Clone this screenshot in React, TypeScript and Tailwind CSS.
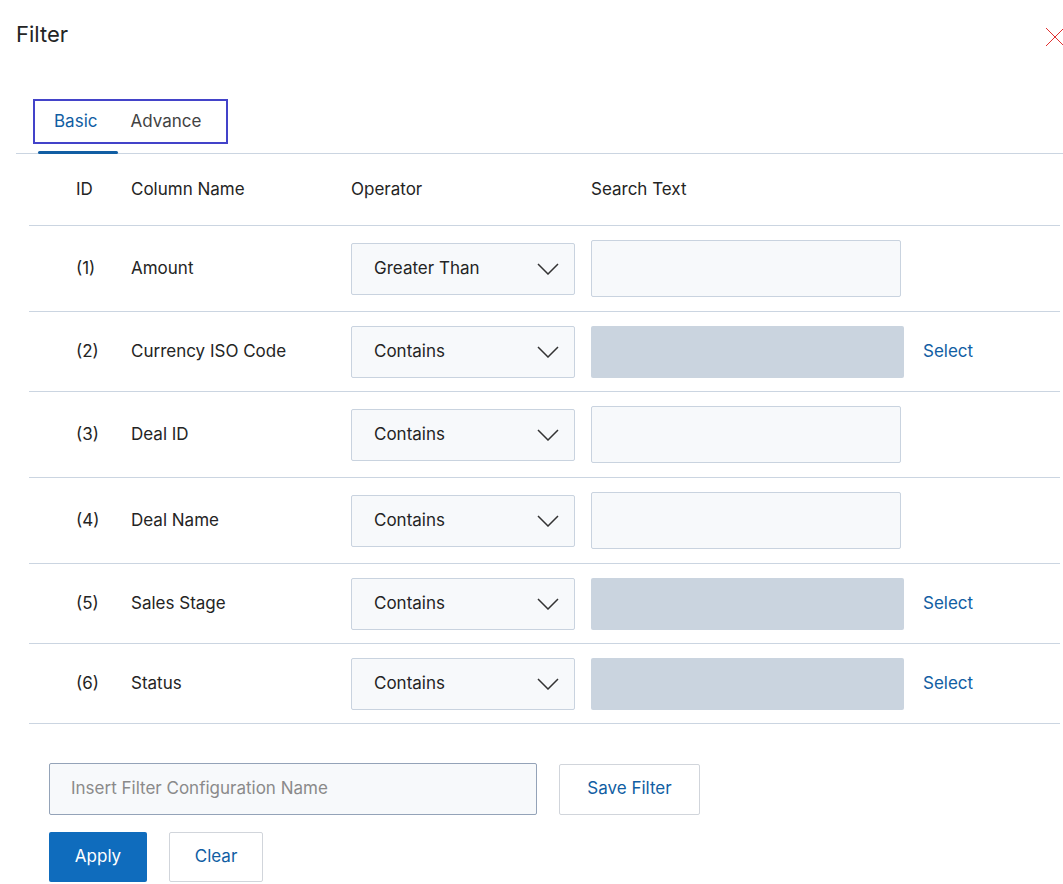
import React from "react";

const rows = [
  { id: "(1)", name: "Amount", op: "Greater Than", sel: false },
  { id: "(2)", name: "Currency ISO Code", op: "Contains", sel: true },
  { id: "(3)", name: "Deal ID", op: "Contains", sel: false },
  { id: "(4)", name: "Deal Name", op: "Contains", sel: false },
  { id: "(5)", name: "Sales Stage", op: "Contains", sel: true },
  { id: "(6)", name: "Status", op: "Contains", sel: true },
];

function Chevron() {
  return (
    <svg width="22" height="12" viewBox="0 0 22 12" fill="none" stroke="#333" strokeWidth="1.5">
      <path d="M1 1l10 10L21 1" />
    </svg>
  );
}

export default function App() {
  return (
    <div className="w-[1063px] h-[884px] bg-white overflow-hidden relative text-[#242424]" style={{ fontFamily: "Inter, 'Noto Sans', sans-serif" }}>
      <div className="pl-4 pt-[20px] text-[22px] leading-[28px]">Filter</div>
      <svg className="absolute left-[1045px] top-[27px]" width="20" height="20" viewBox="0 0 20 20" stroke="#e03030" strokeWidth="1">
        <path d="M1 1l18 18M19 1L1 19" />
      </svg>
      <div className="ml-4 mt-[51px] border-b border-[#cbd5e1] h-[55px] relative">
        <div className="absolute left-[17px] top-0 w-[195px] h-[45px] border-2 border-[#4343c9] flex items-center text-[17px]">
          <span className="ml-[19px] text-[#115ea3]">Basic</span>
          <span className="ml-[33px] text-[#424242]">Advance</span>
        </div>
        <div className="absolute left-[22px] bottom-[-1px] w-[80px] h-[3px] bg-[#115ea3] rounded-full" />
      </div>
      <div className="ml-[29px] w-[1031px] text-[17px]">
        <div className="flex items-center h-[72px] border-b border-[#cbd5e1]">
          <span className="w-[102px] pl-[47px]">ID</span>
          <span className="w-[220px]">Column Name</span>
          <span className="w-[240px]">Operator</span>
          <span>Search Text</span>
        </div>
        {rows.map((r) => (
          <div key={r.id} className={`flex items-center border-b border-[#cbd5e1] ${r.sel ? "h-[80px]" : "h-[86px]"}`}>
            <span className="w-[102px] pl-[47px]">{r.id}</span>
            <span className="w-[220px]">{r.name}</span>
            <div className="w-[224px] h-[52px] mr-[16px] bg-[#f7f9fb] border border-[#c9d3df] rounded-[2px] flex items-center justify-between pl-[22px] pr-[15px]">
              <span>{r.op}</span>
              <Chevron />
            </div>
            {r.sel ? (
              <>
                <div className="w-[313px] h-[52px] bg-[#cad4df] rounded-[2px]" />
                <span className="ml-[19px] text-[#115ea3]">Select</span>
              </>
            ) : (
              <div className="w-[310px] h-[57px] bg-[#f7f9fb] border border-[#c9d3df] rounded-[2px]" />
            )}
          </div>
        ))}
      </div>
      <div className="ml-[49px] mt-[39px] flex items-center gap-[22px] text-[17px]">
        <div className="w-[488px] h-[52px] bg-[#f7f9fb] border border-[#94a3b8] rounded-[2px] flex items-center pl-[21px] text-[#8a8a8a]">
          Insert Filter Configuration Name
        </div>
        <div className="w-[141px] h-[51px] border border-[#d1d5db] rounded-[2px] flex items-center justify-center text-[#115ea3]">
          Save Filter
        </div>
      </div>
      <div className="ml-[49px] mt-[17px] flex gap-[22px] text-[17px]">
        <div className="w-[98px] h-[50px] bg-[#0f6cbd] text-white flex items-center justify-center rounded-[2px]">Apply</div>
        <div className="w-[94px] h-[50px] border border-[#d1d5db] text-[#115ea3] flex items-center justify-center rounded-[2px]">Clear</div>
      </div>
    </div>
  );
}
